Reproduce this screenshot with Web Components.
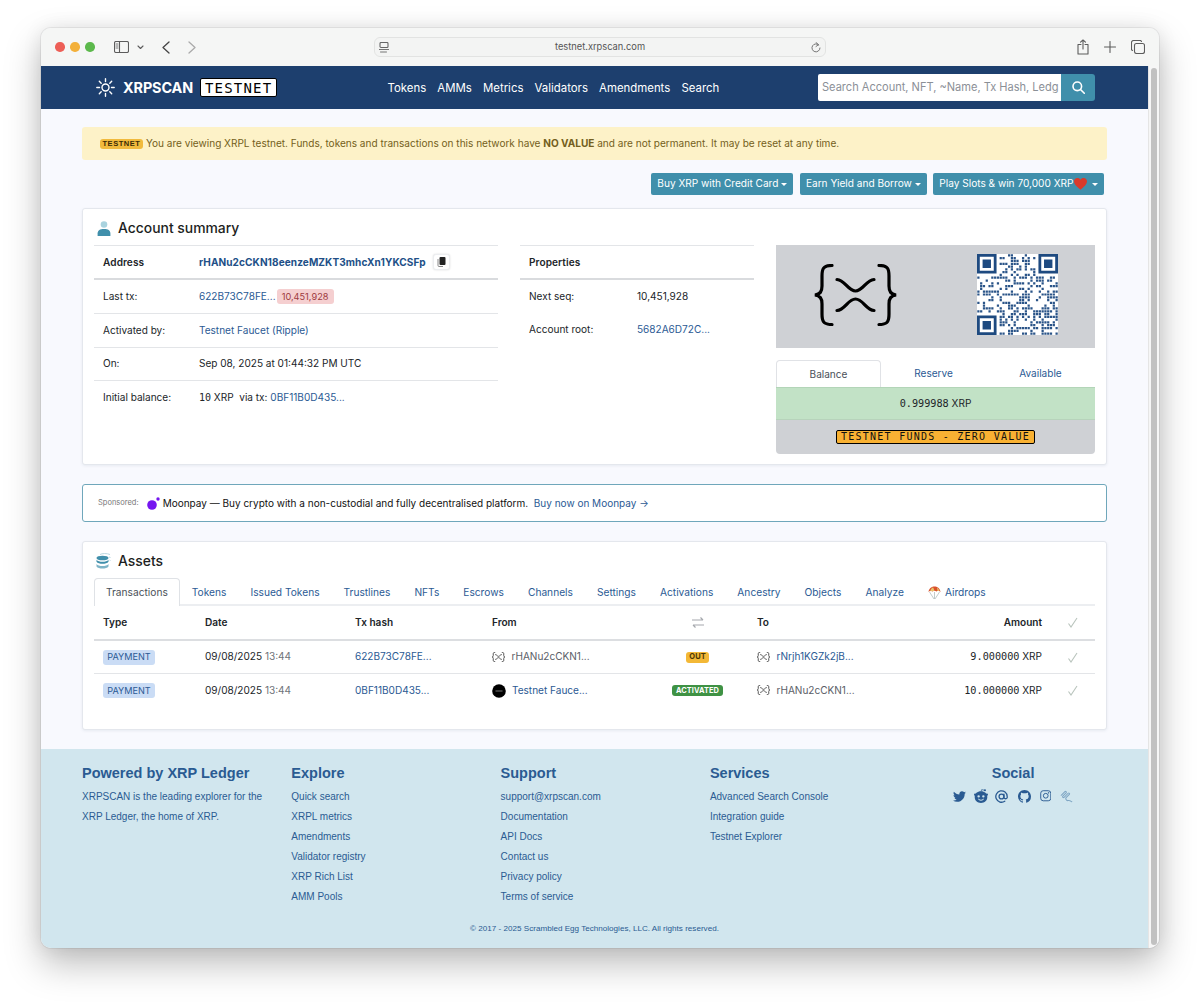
<!DOCTYPE html>
<html lang="en"><head><meta charset="utf-8"><title>XRPSCAN Testnet</title>
<style>
html,body{margin:0;background:#fff}
body{padding:28px 41px 0;height:1002px;box-sizing:border-box;overflow:hidden;font:10.050px/1.3 Inter,"Liberation Sans",sans-serif;color:#212529}
</style></head><body>

<x-window>
  <x-navbar></x-navbar>
  <x-main>
    <x-alert><x-badge kind="testnet" slot="badge">TESTNET</x-badge>You are viewing XRPL testnet. Funds, tokens and transactions on this network have <b>NO VALUE</b> and are not permanent. It may be reset at any time.</x-alert>
    <x-actions>
      <x-button>Buy XRP with Credit Card</x-button>
      <x-button>Earn Yield and Borrow</x-button>
      <x-button>Play Slots &amp; win 70,000 XRP<svg width="13" height="12" viewBox="0 0 24 22" style="vertical-align:-2px;margin-right:2.500px"><path fill="#d93a2b" d="M12 21.5C4 15 0 11 0 6.3 0 2.700 2.800 0 6.300 0 8.600 0 10.800 1.100 12 3 13.200 1.100 15.400 0 17.700 0 21.200 0 24 2.700 24 6.300 24 11 20 15 12 21.500z"/></svg></x-button>
    </x-actions>
    <x-card heading="Account summary">
      <svg slot="icon" width="14" height="15" viewBox="0 0 14 15"><circle cx="7" cy="3.500" r="3.300" fill="#a9d3df"/><path d="M.6 15v-2.500C.6 9.400 3 8 7 8s6.400 1.400 6.400 4.500V15z" fill="#408fab"/></svg>
      <x-summary></x-summary>
    </x-card>
    <x-sponsor></x-sponsor>
    <x-card heading="Assets" assets>
      <svg slot="icon" width="15" height="16" viewBox="0 0 15 16"><ellipse cx="6.500" cy="5" rx="6" ry="2.300" fill="#408fab"/><path d="M.5 6.800c1 1.500 3.500 2 6 2s5-.5 6-2v2c-1 1.500-3.500 2-6 2s-5-.5-6-2z" fill="#408fab"/><path d="M.5 11c1 1.500 3.500 2 6 2s5-.5 6-2v2.500c-1 1.500-3.500 2-6 2s-5-.5-6-2z" fill="#7eb4c7"/><path d="M4 1.500C6 .3 11 .2 14 1.500M13 4l1.500.5M13.500 7l1 .5" fill="none" stroke="#b9d7e1"/></svg>
      <x-assets></x-assets>
    </x-card>
  </x-main>
  <x-footer></x-footer>
</x-window>

<script>
const tpl=(html)=>{const t=document.createElement('template');t.innerHTML=html;return t};
function def(name,html,extra){
  const t=tpl(html);
  customElements.define(name,class extends HTMLElement{
    constructor(){super();this.attachShadow({mode:'open'}).appendChild(t.content.cloneNode(true));if(extra)extra.call(this,this.shadowRoot)}
  });
}
def('x-link',`<style>:host{display:inline;color:#2b5a94}a{color:inherit;text-decoration:none}</style><a href="#"><slot></slot></a>`);
def('x-mono',`<style>:host{display:inline;font-family:"DejaVu Sans Mono","Liberation Mono",monospace;font-size:10.200px}</style><slot></slot>`);
def('x-badge',`<style>
:host{display:inline-flex;align-items:center;justify-content:center;border-radius:3px;white-space:nowrap;line-height:1}
:host([kind=testnet]){background:#f1ba3d;color:#3b2b05;font:700 7.500px/1 "Liberation Sans",sans-serif;letter-spacing:.55px;width:43px;height:10px;margin-right:3px}
:host([kind=block]){background:#f5cfd0;color:#9e3a40;font-size:9.200px;height:15px;width:57px;margin-left:1px}
:host([kind=pay]){background:#cadcf5;color:#2b5a94;font-size:9.100px;height:15px;width:52px}
:host([kind=out]){background:#f3b836;color:#4a3604;font:700 7.500px/1 Inter,sans-serif;height:11px;width:23px}
:host([kind=act]){background:#3f9244;color:#fff;font:700 7.400px/1 Inter,sans-serif;height:11px;width:51px;letter-spacing:.1px}
</style><slot></slot>`);
def('x-xlogo',`<style>:host{display:inline-flex}svg{display:block;width:100%;height:100%}path{fill:none;stroke:currentColor;stroke-width:var(--sw,1);vector-effect:non-scaling-stroke;stroke-linecap:round}</style>
<svg viewBox="0 0 83 62"><path d="M18 1.500C9 1.500 8 5 8 12V22C8 28 6 30 1 31 6 32 8 34 8 40V50C8 57 9 60.500 18 60.500"/><path d="M65 1.500C74 1.500 75 5 75 12V22C75 28 77 30 82 31 77 32 75 34 75 40V50C75 57 74 60.500 65 60.500"/><path d="M23 15.500C31 16 34 27 41.500 27 49 27 52 16 60 15.500"/><path d="M23 46.500C31 46 34 35 41.500 35 49 35 52 46 60 46.500"/></svg>`);

def('x-toolbar',`<style>
:host{display:flex;align-items:center;height:38px;background:#f5f6f5;flex:none;color:#5c5c5c;position:relative}
.lights{display:flex;gap:5.500px;margin-left:14px}.lights i{width:9.500px;height:9.500px;border-radius:50%}
svg{display:block;fill:none;stroke:currentColor;stroke-width:1.100;stroke-linecap:round;stroke-linejoin:round}
.side{margin-left:19.500px}.dd{margin-left:7.500px}.back{margin-left:18px}.fwd{margin-left:18px;color:#aaa}
.addr{margin-left:178.500px;width:452px;height:20px;box-sizing:border-box;border:1px solid #e2e3e2;border-radius:6px;background:#f3f4f3;display:flex;align-items:center;padding:0 4px;color:#666}
.addr span{flex:1;text-align:center;font:9.300px/1 Inter,sans-serif;color:#555}
.r1{margin-left:251px}.r2{margin-left:15px}.r3{margin-left:15px}
</style>
<div class="lights"><i style="background:#ed5f57"></i><i style="background:#f3b03a"></i><i style="background:#5cb94c"></i></div>
<svg class="side" width="15" height="12" viewBox="0 0 15 12"><rect x=".5" y=".5" width="14" height="11" rx="1.500"/><path d="M5.500.5v11"/><path d="M2 3h2M2 5h2M2 7h2" stroke-width=".8"/></svg>
<svg class="dd" width="7" height="5" viewBox="0 0 7 5"><path d="M1 1l2.500 2.500L6 1"/></svg>
<svg class="back" width="8" height="13" viewBox="0 0 8 13" style="color:#444"><path d="M7 1L1 6.500 7 12" stroke-width="1.300"/></svg>
<svg class="fwd" width="8" height="13" viewBox="0 0 8 13"><path d="M1 1l6 5.500L1 12" stroke-width="1.300"/></svg>
<div class="addr">
<svg width="10" height="11" viewBox="0 0 10 11"><rect x="1" y=".5" width="8" height="5" rx="1"/><path d="M0 7.500h10M1.500 10h6" stroke-width=".9"/></svg>
<span>testnet.xrpscan.com</span>
<svg width="10" height="11" viewBox="0 0 10 11"><path d="M7.800 3A4 4 0 1 0 9 6M5 .5l2.500 2.200L5 4.500" stroke-width=".9"/></svg>
</div>
<svg class="r1" width="12" height="16" viewBox="0 0 12 16"><path d="M4 5.500H1v9.500h10V5.500H8M6 10V1M3.500 3.200L6 1l2.500 2.200"/></svg>
<svg class="r2" width="12" height="12" viewBox="0 0 12 12"><path d="M6 .5v11M.5 6h11"/></svg>
<svg class="r3" width="14" height="14" viewBox="0 0 14 14"><rect x="3.500" y="3.500" width="10" height="10" rx="2"/><path d="M10.500 1.500A1.500 1.500 0 0 0 9 .5H2.500a2 2 0 0 0-2 2V9A1.500 1.500 0 0 0 1.500 10.500"/></svg>`);

def('x-window',`<style>
:host{display:flex;flex-direction:column;width:1118px;height:920px;border-radius:10px;overflow:hidden;box-shadow:0 0 0 1px rgba(0,0,0,.06),0 16px 36px rgba(0,0,0,.26),0 0 20px rgba(0,0,0,.08);background:#f8f9fe}
.body{flex:1;display:flex;min-height:0}
.page{flex:1;display:flex;flex-direction:column;min-width:0}
.bar{width:11px;flex:none;background:#f6f6f6;border-left:1px solid #e5e5e5;box-sizing:border-box;padding:2px 2px 3px 2px;display:flex}
.bar i{flex:1;background:#c1c1c1;border-radius:3px}
</style><x-toolbar></x-toolbar><div class="body"><div class="page"><slot></slot></div><div class="bar"><i></i></div></div>`);

def('x-navbar',`<style>
:host{display:flex;align-items:center;height:43px;background:#1d3f6e;color:#fff;flex:none;padding-left:55px;padding-right:53px}
.brand{display:flex;align-items:center;width:291.500px;flex:none}
.name{font:700 14.400px/1 Inter,"Liberation Sans",sans-serif;margin:2px 0 0 8px;letter-spacing:-.1px}
.tn{margin-left:7px;background:#fff;color:#000;border:1px solid #000;border-radius:2px;font:400 14px/1 "DejaVu Sans Mono",monospace;letter-spacing:1.200px;height:19px;width:77px;box-sizing:border-box;display:flex;align-items:center;justify-content:center}
nav{display:flex;gap:11.200px;font:11.400px/1 Inter,sans-serif;flex:1;margin-top:2px}
nav a{color:#fff;text-decoration:none}
.search{display:flex;width:277px;height:27px;flex:none}
.input{flex:1;background:#fff;color:#8b9097;font:11.050px/27px Inter,sans-serif;padding-left:4px;white-space:nowrap;border-radius:2px 0 0 2px}
.go{width:34px;background:#408fab;border-radius:0 3px 3px 0;display:flex;align-items:center;justify-content:center}
</style>
<div class="brand">
<svg width="19" height="19" viewBox="0 0 19 19" fill="none" stroke="#fff" stroke-width="1.400" stroke-linecap="round"><circle cx="9.500" cy="9.500" r="3.500"/><path d="M9.500.8v2.700M9.500 15.500v2.700M.8 9.500h2.700M15.500 9.500h2.700M3.300 3.300l1.900 1.900M13.800 13.800l1.900 1.900M3.300 15.700l1.900-1.900M13.800 5.200l1.900-1.900"/></svg>
<span class="name">XRPSCAN</span><span class="tn">TESTNET</span></div>
<nav><a href="#">Tokens</a><a href="#">AMMs</a><a href="#">Metrics</a><a href="#">Validators</a><a href="#">Amendments</a><a href="#">Search</a></nav>
<div class="search"><div class="input">Search Account, NFT, ~Name, Tx Hash, Ledg</div><div class="go"><svg width="13" height="13" viewBox="0 0 13 13" fill="none" stroke="#fff" stroke-width="1.600" stroke-linecap="round"><circle cx="5.300" cy="5.300" r="4.300"/><path d="M8.500 8.500l3.800 3.800"/></svg></div></div>`);

def('x-main',`<style>:host{display:flex;flex-direction:column;flex:none;height:640px;box-sizing:border-box;padding:18px 41px 19px;background:#f8f9fe}</style><slot></slot>`);
def('x-alert',`<style>:host{display:flex;align-items:center;height:33px;flex:none;background:#fdf2c8;border-radius:3px;color:#745f20;padding-left:18px;white-space:pre-wrap}
.t{display:block}</style><slot name="badge"></slot><span class="t"><slot></slot></span>`);
def('x-actions',`<style>:host{display:flex;justify-content:flex-end;gap:6.500px;margin:13px 3px 13px 0;height:22px;flex:none}</style><slot></slot>`);
def('x-button',`<style>:host{display:inline-flex;align-items:center;background:#408fab;color:#fff;border-radius:2px;padding:0 6px;white-space:nowrap;height:22px;font-size:10.100px}
i{margin-left:3px;border-top:3.500px solid #fff;border-left:3.500px solid transparent;border-right:3.500px solid transparent}</style><slot></slot><i></i>`);
def('x-card',`<style>
:host{display:block;flex:none;background:#fff;border:1px solid #e4e7ed;border-radius:3px;box-sizing:border-box;box-shadow:0 1px 3px rgba(40,60,90,.08);padding:0 11px 10px;margin-bottom:19px}
:host([assets]){height:189px;margin-bottom:0}
header{display:flex;align-items:center;height:36px;box-sizing:border-box;padding:2px 0 0 3px;gap:7px}
:host([assets]) header{padding-left:2px}
h2{margin:0;font:500 13.900px/1 Inter,sans-serif;color:#1c1e21;padding-top:1px}
</style><header><slot name="icon"></slot><h2></h2></header><slot></slot>`,function(r){queueMicrotask(()=>{r.querySelector('h2').textContent=this.getAttribute('heading')})});

def('x-kv',`<style>
:host{display:flex;align-items:center;height:33.500px;box-sizing:border-box;border-top:1px solid #e3e5e8;padding-left:9px;white-space:nowrap}
:host([head]){font-weight:600;border-bottom:2px solid #d9dbde;height:34.500px;letter-spacing:.1px;padding-top:1px}
.l{flex:none;width:var(--lw,96px)}
.v{display:flex;align-items:center;white-space:pre}
</style><div class="l"><slot name="l"></slot></div><div class="v"><slot></slot></div>`);

def('x-summary',`<style>
:host{display:grid;grid-template-columns:404px 234px 319px;column-gap:22px}
.mid{--lw:108px}
.vis{background:#cfd1d5;height:103px;display:flex;align-items:flex-start}
.logo{margin:19px 0 0 38px;width:83px;height:62px;color:#000;--sw:3.200}
.qr{margin:9px 0 0 80px;display:block;background:#fff}
.tabs{display:grid;grid-template-columns:105px 105px 1fr;margin-top:12px;height:27px;text-align:center;line-height:27px;color:#2b5a94}
.tabs .on{background:#fff;border:1px solid #e0e2e6;border-bottom:0;border-radius:4px 4px 0 0;color:#495057;box-sizing:border-box;line-height:26px}
.bal{height:33px;background:#c2e2c6;border-top:1px solid #b3d5b8;border-bottom:1px solid #b7d3bb;box-sizing:border-box;display:flex;align-items:center;justify-content:center;white-space:pre}
.warn{height:34px;background:#cfd1d5;border-radius:0 0 4px 4px;display:flex;align-items:center;justify-content:center}
.warn span{background:#f8b133;border:1px solid #000;border-radius:2px;font:10px/1 "DejaVu Sans Mono",monospace;letter-spacing:1.250px;color:#111;height:14px;width:199px;box-sizing:border-box;display:flex;align-items:center;justify-content:center;white-space:pre}
.copy{margin-left:7px;width:17px;height:16px;border:1px solid #eceef1;border-radius:3px;background:#fff;box-shadow:0 0 2px rgba(0,0,0,.15);display:flex;align-items:center;justify-content:center;box-sizing:border-box}
</style>
<div>
<x-kv head><span slot="l">Address</span><x-link style="font-weight:700;color:#214f87;letter-spacing:.09px">rHANu2cCKN18eenzeMZKT3mhcXn1YKCSFp</x-link><span class="copy"><svg width="9" height="10" viewBox="0 0 9 10"><rect x="2.500" y="0" width="6" height="8" rx="1" fill="#222"/><path d="M1 2v6.500a1 1 0 0 0 1 1h4" fill="none" stroke="#888"/></svg></span></x-kv>
<x-kv style="border-top:0"><span slot="l">Last tx:</span><x-link>622B73C78FE...</x-link><x-badge kind="block">10,451,928</x-badge></x-kv>
<x-kv><span slot="l">Activated by:</span><x-link>Testnet Faucet (Ripple)</x-link></x-kv>
<x-kv><span slot="l">On:</span>Sep 08, 2025 at 01:44:32 PM UTC</x-kv>
<x-kv><span slot="l">Initial balance:</span><x-mono style="font-size:10px">10</x-mono><span> XRP  via tx: </span><x-link>0BF11B0D435...</x-link></x-kv>
</div>
<div class="mid">
<x-kv head><span slot="l">Properties</span></x-kv>
<x-kv style="border-top:0"><span slot="l">Next seq:</span>10,451,928</x-kv>
<x-kv style="border-top:0"><span slot="l">Account root:</span><x-link>5682A6D72C...</x-link></x-kv>
</div>
<div>
<div class="vis"><x-xlogo class="logo"></x-xlogo><svg class="qr" id="qr" width="81" height="81" viewBox="0 0 29 29" shape-rendering="geometricPrecision"></svg></div>
<div class="tabs"><div class="on">Balance</div><div>Reserve</div><div>Available</div></div>
<div class="bal"><x-mono>0.999988</x-mono><span> XRP</span></div>
<div class="warn"><span>TESTNET FUNDS - ZERO VALUE</span></div>
</div>`,function(r){
  const n=29;let s=987,d='';
  const rnd=()=>{s=(s*1664525+1013904223)%4294967296;return s/4294967296};
  const inF=(x,y,a,b)=>x>=a&&x<a+8&&y>=b&&y<b+8;
  for(let y=0;y<n;y++)for(let x=0;x<n;x++){
    if(inF(x,y,0,0)||inF(x,y,21,0)||inF(x,y,0,21))continue;
    if(rnd()<.42)d+=`M${x+.1} ${y+.1}h.8v.8h-.8z`;
  }
  const f=(a,b)=>`M${a} ${b}h7v7h-7zM${a+1} ${b+1}v5h5v-5z M${a+2} ${b+2}h3v3h-3z`;
  r.getElementById('qr').innerHTML=`<path fill="#2a5488" d="${d}"/><path fill="#1e4a80" fill-rule="evenodd" d="${f(0,0)}${f(22,0)}${f(0,22)}"/>`;
});

def('x-sponsor',`<style>
:host{display:flex;align-items:center;height:38px;flex:none;box-sizing:border-box;background:#fff;border:1px solid #6fa7bb;border-radius:3px;margin-bottom:19px;padding-left:15px;white-space:pre;color:#111;font-size:10px}
.s{font-size:7.500px;color:#777;margin-right:8px}
svg{margin-right:3px}
</style><span class="s">Sponsored:</span><svg width="13" height="13" viewBox="0 0 13 13"><circle cx="5" cy="8" r="4.800" fill="#7515f0"/><circle cx="11" cy="2" r="1.700" fill="#7515f0"/></svg><span>Moonpay — Buy crypto with a non-custodial and fully decentralised platform.  </span><x-link>Buy now on Moonpay →</x-link>`);

def('x-tab',`<style>:host{display:flex;align-items:center;padding:0 11px;height:28px;color:#2b5a94;white-space:nowrap;box-sizing:border-box;border:1px solid transparent;border-bottom:0;position:relative;font-size:10.200px}
:host([on]){background:#fff;color:#495057;border-color:#dfe2e6;border-radius:4px 4px 0 0}</style><slot></slot>`);

def('x-row',`<style>:host{display:grid;grid-template-columns:9px 102px 150px 137px 148px 117px 285px 53px;align-items:center;height:33px;box-sizing:border-box;border-bottom:1px solid #e3e5e8;white-space:pre;color:#212529}
:host([head]){font-weight:600;height:35px;border-bottom:2px solid #dcdee1;}
:host([last]){border-bottom:0}
::slotted(:first-child){grid-column:2}</style><slot></slot>`);
def('x-cell',`<style>:host{display:flex;align-items:center;min-width:0}
:host([c]){justify-content:center;padding-right:2px}:host([r]){justify-content:flex-end}:host([k]){justify-content:flex-end;padding-right:16px}
:host([g]){color:#5b6067}</style><slot></slot>`);
def('x-check',`<svg width="13" height="13" viewBox="0 0 13 13" fill="none" stroke="#b9c4bd" stroke-width="1.100" style="display:block"><path d="M2.500 7.500l2.500 3.500 6-9"/></svg>`);

const X='<x-xlogo style="width:13px;height:10px;color:#555;margin-right:6.500px"></x-xlogo>';
const chk='<x-cell k><x-check></x-check></x-cell>';
const date='<x-cell>09/08/2025<span style="color:#6f747a"> 13:44</span></x-cell>';
def('x-assets',`<style>:host{display:block}
.tabs{display:flex;border-bottom:2px solid #eceef1;height:26px}
x-tab svg{margin-right:4px}
</style>
<div class="tabs"><x-tab on>Transactions</x-tab><x-tab>Tokens</x-tab><x-tab>Issued Tokens</x-tab><x-tab>Trustlines</x-tab><x-tab>NFTs</x-tab><x-tab>Escrows</x-tab><x-tab>Channels</x-tab><x-tab>Settings</x-tab><x-tab>Activations</x-tab><x-tab>Ancestry</x-tab><x-tab>Objects</x-tab><x-tab>Analyze</x-tab><x-tab><svg width="13" height="14" viewBox="0 0 13 14"><path d="M.5 6C1 2 4 .5 6.500.5S12 2 12.500 6C11 4.500 9.500 4.500 8.500 5.500 7.500 4.500 5.500 4.500 4.500 5.500 3.500 4.500 2 4.500.5 6z" fill="#d9512c"/><path d="M3 3C2.600 4 2.500 4.500 2.500 5.300L6.300 5C6 3.500 5.500 2 5 1.300zM9 1.800L9.600 5H11.500C11 3.500 10.200 2.500 9 1.800z" fill="#e9c46a"/><path d="M1.500 6l4.500 7M11.500 6l-4.500 7M6.500 6v7" stroke="#9aa" stroke-width=".6" fill="none"/></svg>Airdrops</x-tab></div>
<x-row head><x-cell>Type</x-cell><x-cell>Date</x-cell><x-cell>Tx hash</x-cell><x-cell>From</x-cell><x-cell c><svg width="12" height="11" viewBox="0 0 12 11" fill="none" stroke="#a5a8ad" stroke-width="1.200"><path d="M0 3h11M8.500.5L11 3M12 8H1M3.500 10.500L1 8"/></svg></x-cell><x-cell>To<span style="flex:1"></span>Amount</x-cell>${chk}</x-row>
<x-row><x-cell><x-badge kind="pay">PAYMENT</x-badge></x-cell>${date}<x-cell><x-link>622B73C78FE...</x-link></x-cell><x-cell g>${X}rHANu2cCKN1...</x-cell><x-cell c><x-badge kind="out">OUT</x-badge></x-cell><x-cell>${X}<x-link>rNrjh1KGZk2jB...</x-link><span style="flex:1"></span><x-mono>9.000000</x-mono> XRP</x-cell>${chk}</x-row>
<x-row last><x-cell><x-badge kind="pay">PAYMENT</x-badge></x-cell>${date}<x-cell><x-link>0BF11B0D435...</x-link></x-cell><x-cell><svg width="14" height="14" viewBox="0 0 14 14" style="margin-right:6px"><circle cx="7" cy="7" r="6.800" fill="#000"/><rect x="3.500" y="6.500" width="7" height="1" fill="#777"/></svg><x-link>Testnet Fauce...</x-link></x-cell><x-cell c><x-badge kind="act">ACTIVATED</x-badge></x-cell><x-cell><x-cell g>${X}rHANu2cCKN1...</x-cell><span style="flex:1"></span><x-mono>10.000000</x-mono> XRP</x-cell>${chk}</x-row>`);

def('x-fcol',`<style>:host{display:block}h3{margin:0 0 5px;font:700 14.500px/18px "Liberation Sans",Arial,sans-serif;color:#2a5b92;white-space:nowrap}
.l{font:10px/20px "Liberation Sans",Arial,sans-serif;color:#2a5b92;display:block}
</style><h3></h3><div class="l"><slot></slot></div>`,function(r){queueMicrotask(()=>{r.querySelector('h3').textContent=this.getAttribute('heading')})});
const lines=a=>a.map(t=>`<div>${t}</div>`).join('');
def('x-footer',`<style>
:host{display:block;flex:none;height:199px;box-sizing:border-box;background:#d1e6ee;padding:15px 41px 0;font:10px/20px "Liberation Sans",sans-serif;color:#2a5b92;position:relative}
.g{display:grid;grid-template-columns:209.300px 209.300px 209.300px 209.300px 1fr;height:155px}
.icons{display:flex;justify-content:center;align-items:center;height:20px;margin-top:-1px}
.icons svg{display:block;width:13px;height:13px;fill:#2a5b92;flex:none}
.copy{text-align:center;font-size:8.100px;line-height:12px;color:#2a5b92;margin-top:4px}
</style>
<div class="g">
<x-fcol heading="Powered by XRP Ledger">${lines(['XRPSCAN is the leading explorer for the','XRP Ledger, the home of XRP.'])}</x-fcol>
<x-fcol heading="Explore">${lines(['Quick search','XRPL metrics','Amendments','Validator registry','XRP Rich List','AMM Pools'])}</x-fcol>
<x-fcol heading="Support">${lines(['support@xrpscan.com','Documentation','API Docs','Contact us','Privacy policy','Terms of service'])}</x-fcol>
<x-fcol heading="Services">${lines(['Advanced Search Console','Integration guide','Testnet Explorer'])}</x-fcol>
<x-fcol heading="Social" style="text-align:center"><div class="icons">
<svg viewBox="0 0 512 512"><path d="M459.370 151.716c.325 4.548.325 9.097.325 13.645 0 138.720-105.583 298.558-298.558 298.558-59.452 0-114.680-17.219-161.137-47.106 8.447.974 16.568 1.299 25.340 1.299 49.055 0 94.213-16.568 130.274-44.832-46.132-.975-84.792-31.188-98.112-72.772 6.498.974 12.995 1.624 19.818 1.624 9.421 0 18.843-1.300 27.614-3.573-48.081-9.747-84.143-51.980-84.143-102.985v-1.299c13.969 7.797 30.214 12.670 47.431 13.319-28.264-18.843-46.781-51.005-46.781-87.391 0-19.492 5.197-37.360 14.294-52.954 51.655 63.675 129.300 105.258 216.365 109.807-1.624-7.797-2.599-15.918-2.599-24.040 0-57.828 46.782-104.934 104.934-104.934 30.213 0 57.502 12.670 76.670 33.137 23.715-4.548 46.456-13.320 66.599-25.340-7.798 24.366-24.366 44.833-46.132 57.827 21.117-2.273 41.584-8.122 60.426-16.243-14.292 20.791-32.161 39.308-52.628 54.253z"/></svg>
<svg viewBox="0 0 16 16" style="margin-left:8px;width:14px;height:14px"><path fill-rule="evenodd" d="M8 2.500C3.800 2.500.8 5 .8 9.200S3.800 16 8 16s7.200-2.600 7.200-6.800S12.200 2.500 8 2.500zM5.300 7a1.400 1.400 0 1 1 0 2.800 1.400 1.400 0 0 1 0-2.800zm5.400 0a1.400 1.400 0 1 1 0 2.800 1.400 1.400 0 0 1 0-2.800zM4.500 11.200h1c.6.800 1.500 1.100 2.500 1.100s1.900-.3 2.500-1.100h1c-.6 1.400-2 2.300-3.500 2.300s-2.900-.9-3.500-2.300z"/><circle cx="12.500" cy="1.500" r="1.200"/><path d="M8 3l.8-2.300 3 .7" fill="none" stroke="#2a5b92" stroke-width=".8"/><circle cx="1.300" cy="6.500" r="1.300"/><circle cx="14.700" cy="6.500" r="1.300"/></svg>
<svg viewBox="0 0 16 16" style="margin-left:7px;fill:none;stroke:#2a5b92;stroke-width:1.600"><circle cx="8" cy="8" r="3"/><path d="M11 5v4.500a2.200 2.200 0 0 0 4 0V8a7 7 0 1 0-3 5.800" stroke-linecap="round"/></svg>
<svg viewBox="0 0 16 16" style="margin-left:10px"><path d="M8 0C3.580 0 0 3.580 0 8c0 3.540 2.290 6.530 5.470 7.590.4.070.55-.17.55-.38 0-.19-.01-.82-.01-1.490-2.010.37-2.530-.49-2.690-.94-.09-.23-.48-.94-.82-1.130-.28-.15-.68-.52-.01-.53.63-.01 1.080.58 1.230.82.72 1.210 1.870.87 2.330.66.070-.52.28-.87.51-1.070-1.780-.2-3.640-.89-3.640-3.950 0-.87.31-1.590.82-2.150-.08-.2-.36-1.020.08-2.120 0 0 .67-.21 2.200.82.64-.18 1.320-.27 2-.27.68 0 1.360.09 2 .27 1.530-1.040 2.200-.82 2.200-.82.44 1.100.16 1.920.08 2.120.51.56.82 1.270.82 2.150 0 3.070-1.870 3.750-3.650 3.950.29.25.54.73.54 1.480 0 1.070-.01 1.930-.01 2.200 0 .21.15.46.55.38A8.013 8.013 0 0016 8c0-4.420-3.580-8-8-8z"/></svg>
<svg viewBox="0 0 16 16" style="margin-left:9px;fill:none;stroke:#2a5b92;stroke-width:1.300;width:11.500px;height:11.500px"><rect x="1" y="1" width="14" height="14" rx="3.500"/><circle cx="8" cy="8" r="3.300"/><circle cx="12" cy="4" r=".5"/></svg>
<svg viewBox="0 0 16 16" style="margin-left:9px;fill:none;stroke:#7fa6c4;stroke-width:1.300;width:13px;height:13px" stroke-linecap="round"><path d="M1.500 6.500L6 2C7 1 8.500 2.500 7.500 3.500L3.500 7.500C2.500 8.500 4 10 5 9L10 4C11 3 12.500 4.500 11.500 5.500L7.500 9.500C6.500 10.500 7.500 13.500 10 13 12 12.700 13 13.500 14.500 14.500"/></svg>
</div></x-fcol>
</div>
<div class="copy">© 2017 - 2025 Scrambled Egg Technologies, LLC. All rights reserved.</div>`);
</script>
</body></html>
